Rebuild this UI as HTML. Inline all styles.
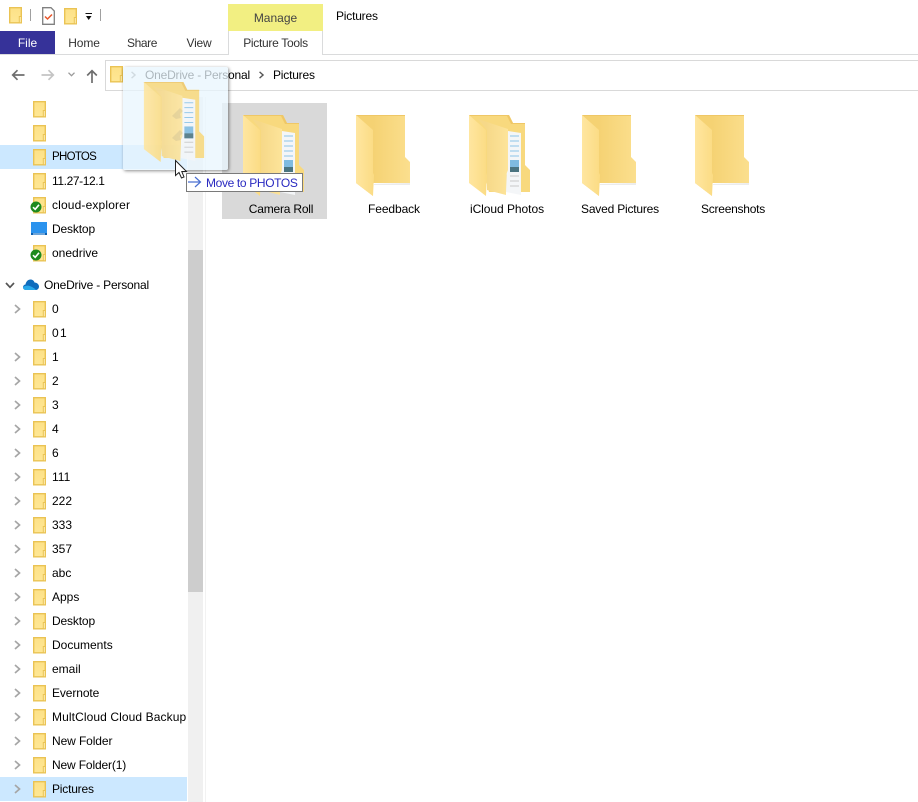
<!DOCTYPE html>
<html><head><meta charset="utf-8">
<style>
html,body{margin:0;padding:0;background:#fff;}
#p{position:relative;width:918px;height:802px;overflow:hidden;background:#fff;font:12px/16px "Liberation Sans",sans-serif;color:#000;}
#p div{position:absolute;white-space:nowrap;}
svg{position:absolute;overflow:visible;}
.r{left:0;width:187px;height:24px;}
.r span{position:absolute;left:52px;top:4px;}
.r svg.f{left:33px;top:4px;width:14px;height:17px;}
.r svg.c{left:13px;top:7px;width:9px;height:10px;}
.c1{text-align:center;width:100px;top:201px;letter-spacing:-.2px;}
.tab{top:35px;text-align:center;color:#333;}
</style></head><body><div id="p">
<svg width="0" height="0" style="position:absolute">
<defs>
<linearGradient id="g1" x1="0" y1="0" x2="0" y2="1"><stop offset="0" stop-color="#fde187"/><stop offset="1" stop-color="#fee795"/></linearGradient>
<linearGradient id="g2" gradientUnits="userSpaceOnUse" x1="17" y1="0" x2="54" y2="0"><stop offset="0" stop-color="#f5d273"/><stop offset="1" stop-color="#fbdf8e"/></linearGradient>
<linearGradient id="g3" gradientUnits="userSpaceOnUse" x1="0" y1="0" x2="17" y2="0"><stop offset="0" stop-color="#ffe6a0"/><stop offset="1" stop-color="#fbdc85"/></linearGradient>
<linearGradient id="g4" gradientUnits="userSpaceOnUse" x1="17" y1="0" x2="39" y2="0"><stop offset="0" stop-color="#f6d888"/><stop offset="1" stop-color="#fde49a"/></linearGradient>
<symbol id="sf" viewBox="0 0 14 17"><path d="M.7.7H12.300V15.800H.7Z" fill="url(#g1)" stroke="#eac354" stroke-width="1.400"/><path d="M10.300 15.800V9.500H12.300V15.800Z" fill="#fff0b8" stroke="#eac354" stroke-width="1"/></symbol>
<symbol id="ch" viewBox="0 0 9 10"><path d="M2 1L6.500 5L2 9" fill="none" stroke="#a6a6a6" stroke-width="1.700"/></symbol>
<symbol id="ok" viewBox="0 0 12 12"><circle cx="6" cy="6" r="5.500" fill="#1e8a1e"/><path d="M3 6.200L5.200 8.300L9 3.800" fill="none" stroke="#fff" stroke-width="1.600"/></symbol>
<symbol id="pf" viewBox="0 0 61 81">
<path d="M0 0H40L44 8H56V50L61 55V77H20Z" fill="#f8d97e"/>
<path d="M0 0H40L44 8H56V9H42L38 1H0Z" fill="#efc766"/>
<path d="M39 16L52 18V80L37 77Z" fill="#f4f6f8"/>
<path d="M41 21H50M41 26H50M41 31H50M41 36H50M41 41H50" stroke="#8cc4e8" stroke-width="1"/>
<rect x="41" y="45" width="9" height="12" fill="#7fbbe0"/><rect x="41" y="52" width="9" height="5" fill="#4a7480"/>
<path d="M41 61H50M41 66H50M41 71H50" stroke="#c8c8c8" stroke-width="1"/>
<path d="M9 4L39 14V55L37 60V80L18 75V15Z" fill="url(#g4)"/>
<path d="M0 0L17 15V58L18 60L17 81L0 68Z" fill="url(#g3)"/>
</symbol>
<symbol id="ff" viewBox="0 0 54 81">
<path d="M0 0H49V42L54 47V68H17V81L0 68Z" fill="url(#g2)"/>
<path d="M0 0H49V1H2Z" fill="#efc766"/>
<path d="M0 0L17 15V58L18 60L17 81L0 68Z" fill="url(#g3)"/>
<path d="M54 68H66L62 70H18V69Z" fill="#e4e4e4" opacity=".7"/>
</symbol>
</defs></svg>

<!-- quick access bar -->
<svg style="left:9px;top:7px;width:14px;height:17px"><use href="#sf" width="14" height="17"/></svg>
<div style="left:30px;top:9px;width:1px;height:12px;background:#a0a0a0"></div>
<svg style="left:42px;top:7px;width:13px;height:18px" viewBox="0 0 13 18"><path d="M.7.700H9L12.300 4V17.300H.7Z" fill="#fff" stroke="#808080" stroke-width="1.300"/><path d="M3 9.500L5.500 12L10 7.500" fill="none" stroke="#e8552a" stroke-width="1.500"/></svg>
<svg style="left:64px;top:8px;width:14px;height:17px"><use href="#sf" width="14" height="17"/></svg>
<svg style="left:84px;top:13px;width:9px;height:8px" viewBox="0 0 9 8"><path d="M1.500 .5H8" stroke="#111"/><path d="M2 3H7.500L4.700 7Z" fill="#111"/></svg>
<div style="left:100px;top:9px;width:1px;height:12px;background:#a0a0a0"></div>

<!-- ribbon -->
<div style="left:0;top:54px;width:918px;height:1px;background:#dadbdc"></div>
<div style="left:0;top:31px;width:55px;height:23px;background:#363299;color:#fff;text-align:center;line-height:24px;">File</div>
<div class="tab" style="left:59px;width:50px;letter-spacing:-.1px">Home</div>
<div class="tab" style="left:117px;width:50px;letter-spacing:-.4px">Share</div>
<div class="tab" style="left:174px;width:50px;letter-spacing:-.2px">View</div>
<div style="left:228px;top:4px;width:95px;height:27px;background:#f2ef82;text-align:center;line-height:28px;color:#444">Manage</div>
<div style="left:228px;top:31px;width:93px;height:24px;background:#fff;border-left:1px solid #dadbdc;border-right:1px solid #dadbdc;text-align:center;line-height:24px;color:#333;letter-spacing:-.3px">Picture Tools</div>
<div style="left:336px;top:8px;letter-spacing:-.2px">Pictures</div>

<!-- nav -->
<svg style="left:11px;top:69px;width:14px;height:12px" viewBox="0 0 14 12"><path d="M13.500 6H2M6.500 1.200L1.700 6L6.500 10.800" fill="none" stroke="#6e6e6e" stroke-width="1.700"/></svg>
<svg style="left:41px;top:69px;width:14px;height:12px" viewBox="0 0 14 12"><path d="M.5 6H12M7.500 1.200L12.300 6L7.500 10.800" fill="none" stroke="#c4c4c4" stroke-width="1.700"/></svg>
<svg style="left:68px;top:72px;width:7px;height:5px" viewBox="0 0 7 5"><path d="M.5 .7L3.500 3.700L6.500 .7" fill="none" stroke="#9a9a9a" stroke-width="1.300"/></svg>
<svg style="left:86px;top:69px;width:12px;height:14px" viewBox="0 0 12 14"><path d="M6 14V2M1.200 6.500L6 1.700L10.800 6.500" fill="none" stroke="#6e6e6e" stroke-width="1.700"/></svg>
<div style="left:105px;top:60px;width:813px;height:29px;border:1px solid #d9d9d9;border-right:none;background:#fff"></div>
<svg style="left:110px;top:66px;width:14px;height:17px"><use href="#sf" width="14" height="17"/></svg>
<svg style="left:130px;top:71px;width:7px;height:8px" viewBox="0 0 9 10"><path d="M2 1L6.500 5L2 9" fill="none" stroke="#8a8a8a" stroke-width="1.800"/></svg>
<div style="left:145px;top:67px;letter-spacing:-.2px">OneDrive - Personal</div>
<svg style="left:258px;top:71px;width:7px;height:8px" viewBox="0 0 9 10"><path d="M2 1L6.500 5L2 9" fill="none" stroke="#555" stroke-width="1.800"/></svg>
<div style="left:273px;top:67px;letter-spacing:-.2px">Pictures</div>

<!-- scrollbar -->
<div style="left:188px;top:97px;width:15px;height:705px;background:#f0f0f0"></div>
<div style="left:188px;top:250px;width:15px;height:342px;background:#cdcdcd"></div>
<div style="left:205px;top:97px;width:1px;height:705px;background:#f2f2f2"></div>

<!-- tree -->
<div class="r" style="top:97px"><svg class="f"><use href="#sf" width="14" height="17"/></svg></div>
<div class="r" style="top:121px"><svg class="f"><use href="#sf" width="14" height="17"/></svg></div>
<div class="r" style="top:145px;background:#cce8ff"><svg class="f"><use href="#sf" width="14" height="17"/></svg><span style="font-size:11.5px;letter-spacing:-.7px">PHOTOS</span></div>
<div class="r" style="top:169px"><svg class="f"><use href="#sf" width="14" height="17"/></svg><span style="letter-spacing:-.4px">11.27-12.1</span></div>
<div class="r" style="top:193px"><svg class="f"><use href="#sf" width="14" height="17"/></svg><svg style="left:30px;top:8px;width:12px;height:12px"><use href="#ok" width="12" height="12"/></svg><span style="letter-spacing:.15px">cloud-explorer</span></div>
<div class="r" style="top:217px"><svg style="left:31px;top:5px;width:16px;height:13px" viewBox="0 0 16 13"><rect width="16" height="13" fill="#2b93ee"/><rect y="11" width="16" height="2" fill="#0b5fb0"/><rect x="2" y="11.500" width="12" height="1" fill="#cfe8ff"/></svg><span style="letter-spacing:-.15px">Desktop</span></div>
<div class="r" style="top:241px"><svg class="f"><use href="#sf" width="14" height="17"/></svg><svg style="left:30px;top:8px;width:12px;height:12px"><use href="#ok" width="12" height="12"/></svg><span>onedrive</span></div>

<div class="r" style="top:273px"><svg style="left:5px;top:9px;width:10px;height:7px" viewBox="0 0 10 7"><path d="M1 1L5 5.300L9 1" fill="none" stroke="#555" stroke-width="1.700"/></svg><svg style="left:23px;top:6px;width:16px;height:11px" viewBox="0 0 16 11"><path d="M3 11C1 11 0 9.500 0 8.200C0 6.800 1 5.700 2.500 5.500C3 2.500 5 .5 7.500 .5C9.500 .5 11 1.700 11.500 3.500C14 3.500 16 5.500 16 7.500C16 9.500 14.500 11 13 11Z" fill="#0f6cbd"/><path d="M3 11C1 11 0 9.500 0 8.200C2 6.500 5 6 8 7.500C10 8.500 12 9.500 13 11Z" fill="#28a8ea"/></svg><span style="left:44px;letter-spacing:-.2px">OneDrive - Personal</span></div>

<div class="r" style="top:297px"><svg class="c"><use href="#ch" width="9" height="10"/></svg><svg class="f"><use href="#sf" width="14" height="17"/></svg><span>0</span></div>
<div class="r" style="top:321px"><svg class="f"><use href="#sf" width="14" height="17"/></svg><span style="letter-spacing:-1px">0 1</span></div>
<div class="r" style="top:345px"><svg class="c"><use href="#ch" width="9" height="10"/></svg><svg class="f"><use href="#sf" width="14" height="17"/></svg><span>1</span></div>
<div class="r" style="top:369px"><svg class="c"><use href="#ch" width="9" height="10"/></svg><svg class="f"><use href="#sf" width="14" height="17"/></svg><span>2</span></div>
<div class="r" style="top:393px"><svg class="c"><use href="#ch" width="9" height="10"/></svg><svg class="f"><use href="#sf" width="14" height="17"/></svg><span>3</span></div>
<div class="r" style="top:417px"><svg class="c"><use href="#ch" width="9" height="10"/></svg><svg class="f"><use href="#sf" width="14" height="17"/></svg><span>4</span></div>
<div class="r" style="top:441px"><svg class="c"><use href="#ch" width="9" height="10"/></svg><svg class="f"><use href="#sf" width="14" height="17"/></svg><span>6</span></div>
<div class="r" style="top:465px"><svg class="c"><use href="#ch" width="9" height="10"/></svg><svg class="f"><use href="#sf" width="14" height="17"/></svg><span>111</span></div>
<div class="r" style="top:489px"><svg class="c"><use href="#ch" width="9" height="10"/></svg><svg class="f"><use href="#sf" width="14" height="17"/></svg><span>222</span></div>
<div class="r" style="top:513px"><svg class="c"><use href="#ch" width="9" height="10"/></svg><svg class="f"><use href="#sf" width="14" height="17"/></svg><span>333</span></div>
<div class="r" style="top:537px"><svg class="c"><use href="#ch" width="9" height="10"/></svg><svg class="f"><use href="#sf" width="14" height="17"/></svg><span>357</span></div>
<div class="r" style="top:561px"><svg class="c"><use href="#ch" width="9" height="10"/></svg><svg class="f"><use href="#sf" width="14" height="17"/></svg><span>abc</span></div>
<div class="r" style="top:585px"><svg class="c"><use href="#ch" width="9" height="10"/></svg><svg class="f"><use href="#sf" width="14" height="17"/></svg><span>Apps</span></div>
<div class="r" style="top:609px"><svg class="c"><use href="#ch" width="9" height="10"/></svg><svg class="f"><use href="#sf" width="14" height="17"/></svg><span style="letter-spacing:-.15px">Desktop</span></div>
<div class="r" style="top:633px"><svg class="c"><use href="#ch" width="9" height="10"/></svg><svg class="f"><use href="#sf" width="14" height="17"/></svg><span>Documents</span></div>
<div class="r" style="top:657px"><svg class="c"><use href="#ch" width="9" height="10"/></svg><svg class="f"><use href="#sf" width="14" height="17"/></svg><span>email</span></div>
<div class="r" style="top:681px"><svg class="c"><use href="#ch" width="9" height="10"/></svg><svg class="f"><use href="#sf" width="14" height="17"/></svg><span style="letter-spacing:-.1px">Evernote</span></div>
<div class="r" style="top:705px"><svg class="c"><use href="#ch" width="9" height="10"/></svg><svg class="f"><use href="#sf" width="14" height="17"/></svg><span style="letter-spacing:.1px">MultCloud Cloud Backup</span></div>
<div class="r" style="top:729px"><svg class="c"><use href="#ch" width="9" height="10"/></svg><svg class="f"><use href="#sf" width="14" height="17"/></svg><span style="letter-spacing:-.1px">New Folder</span></div>
<div class="r" style="top:753px"><svg class="c"><use href="#ch" width="9" height="10"/></svg><svg class="f"><use href="#sf" width="14" height="17"/></svg><span style="letter-spacing:-.15px">New Folder(1)</span></div>
<div class="r" style="top:777px;background:#cce8ff"><svg class="c"><use href="#ch" width="9" height="10"/></svg><svg class="f"><use href="#sf" width="14" height="17"/></svg><span style="letter-spacing:-.2px">Pictures</span></div>

<!-- content -->
<div style="left:222px;top:103px;width:105px;height:116px;background:#d9d9d9"></div>
<svg style="left:243px;top:115px;width:61px;height:81px"><use href="#pf" width="61" height="81"/></svg>
<svg style="left:356px;top:115px;width:54px;height:81px"><use href="#ff" width="54" height="81"/></svg>
<svg style="left:469px;top:115px;width:61px;height:81px"><use href="#pf" width="61" height="81"/></svg>
<svg style="left:582px;top:115px;width:54px;height:81px"><use href="#ff" width="54" height="81"/></svg>
<svg style="left:695px;top:115px;width:54px;height:81px"><use href="#ff" width="54" height="81"/></svg>
<div class="c1" style="left:231px">Camera Roll</div>
<div class="c1" style="left:344px;letter-spacing:-.1px">Feedback</div>
<div class="c1" style="left:457px;letter-spacing:-.05px">iCloud Photos</div>
<div class="c1" style="left:570px">Saved Pictures</div>
<div class="c1" style="left:683px;letter-spacing:-.25px">Screenshots</div>

<!-- drag ghost -->
<div style="left:123px;top:67px;width:105px;height:103px;background:rgba(232,245,254,.74);box-shadow:1px 1px 3px rgba(0,0,0,.45);border-radius:2px"></div>
<svg style="left:143px;top:82px;width:62px;height:80px;opacity:.88"><use href="#pf" width="62" height="80"/></svg>
<svg style="left:170px;top:102px;width:30px;height:50px;opacity:.14" viewBox="0 0 30 50"><path d="M2 14L10 6L13 9L10 12L11 16L6 17ZM2 36L10 28L13 31L10 34L11 38L6 39Z" fill="#777"/></svg>

<!-- tooltip -->
<div style="left:186px;top:173px;width:115px;height:17px;border:1px solid #7a7a7a;background:#fff;color:#2a2ac0;line-height:18px"><span style="position:absolute;left:19px;top:0;letter-spacing:-.35px">Move to PHOTOS</span></div>
<svg style="left:188px;top:176px;width:14px;height:12px" viewBox="0 0 14 12"><path d="M0 6H12M7 1L12.500 6L7 11" fill="none" stroke="#4a6fd0" stroke-width="1.200"/></svg>

<!-- cursor -->
<svg style="left:175px;top:160px;width:13px;height:19px" viewBox="0 0 13 19"><path d="M.5 .5V15.500L4 12.500L6.500 18L9 17L6.800 11.500H11.500Z" fill="#fff" stroke="#222" stroke-width="1"/></svg>
</div></body></html>
